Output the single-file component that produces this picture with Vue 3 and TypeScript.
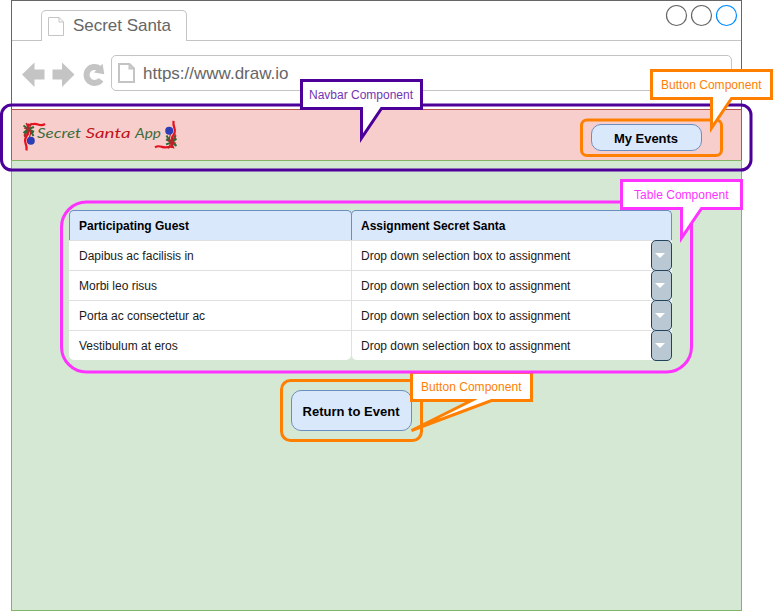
<script setup lang="ts">
interface Callout {
  label: string
  kind: 'navbar' | 'button' | 'table'
  outline: string
  x: number
  baseline: number
  width: number
}

const guests: string[] = [
  'Dapibus ac facilisis in',
  'Morbi leo risus',
  'Porta ac consectetur ac',
  'Vestibulum at eros',
]

const ornaments: string[] = ['', 'rotate(180 78 15.7)']

const callouts: Callout[] = [
  { label: 'Navbar Component', kind: 'navbar', outline: 'M301.5 80.5H421.5V108.5H381.5L361.5 138V108.5H301.5Z', x: 309, baseline: 99, width: 104 },
  { label: 'Button Component', kind: 'button', outline: 'M651.5 70.5H771.5V98.5H731.5L711.5 128V98.5H651.5Z', x: 661, baseline: 89, width: 100.5 },
  { label: 'Table Component', kind: 'table', outline: 'M621.5 180.5H741.5V208.5H701.5L681.5 238V208.5H621.5Z', x: 634, baseline: 199, width: 94.5 },
  { label: 'Button Component', kind: 'button', outline: 'M411.5 372.5H531.5V400.5H491.5L411.5 430.5L471.5 400.5H411.5Z', x: 421, baseline: 391, width: 100.5 },
]
</script>

<template>
  <main class="mockup">
    <section class="browser">
      <header class="tabs">
        <div class="tab">
          <svg class="page-icon" width="16" height="20" viewBox="0 0 16 20">
            <path d="M.5 .5H11L15.5 5V18.5H.5ZM11 .5V5H15.5" />
          </svg>
          <svg class="tab-title" width="100" height="24">
            <text x="0" y="18" textLength="98">Secret Santa</text>
          </svg>
        </div>
        <svg class="controls" width="74" height="24" viewBox="0 0 74 24">
          <circle cx="11.5" cy="11.5" r="10" />
          <circle cx="36.5" cy="11.5" r="10" />
          <circle class="active" cx="61.5" cy="11.5" r="10" />
        </svg>
      </header>

      <div class="toolbar">
        <svg class="nav-icons" width="84" height="28" viewBox="0 0 84 28">
          <path d="M0 13.5L12.5 1.500V8.500H22.500V18.500H12.500V26Z" />
          <path d="M52.500 13.500L40 1.500V8.500H30.500V18.500H40V26Z" />
          <path class="reload" d="M79 18.700A8 8 0 1 1 77.500 7.600" />
          <path d="M80.600 2.800L82.300 13.200L72 11.600Z" />
        </svg>
        <div class="address">
          <svg class="page-icon address-page" width="18" height="21" viewBox="0 0 18 21">
            <path d="M1 1H11.500L16 5.500V19H1ZM11.500 1V5.500H16" />
          </svg>
          <svg class="url" width="150" height="24">
            <text x="0" y="17" textLength="145.5">https://www.draw.io</text>
          </svg>
        </div>
      </div>

      <nav class="navbar">
        <svg class="logo" width="158" height="34" viewBox="0 0 158 34">
          <g v-for="(turn, i) in ornaments" :key="i" :transform="turn">
            <path class="leaf" d="M6 9L1.500 5.500M6 9L1.500 13M6 9L12 7M6 9L12 12M8 10L11.500 16M5 9L3 16" />
            <path class="ribbon" d="M6 3.500V14Q2 19 3.500 23T4.500 30.500M6 5.500Q12 3 16 4.500T23 4" />
            <path class="bow" d="M2 8L10 11M9.500 3L5 14M4 3L8.500 13M9 12L7 19M4 13Q1 15 3 17" />
            <circle class="bauble" cx="8.8" cy="20.7" r="4" />
          </g>
          <text class="green" x="15" y="17.5" textLength="44" lengthAdjust="spacingAndGlyphs">Secret</text>
          <text class="red" x="63.5" y="17.5" textLength="45" lengthAdjust="spacingAndGlyphs">Santa</text>
          <text class="green" x="113" y="17.5" textLength="26" lengthAdjust="spacingAndGlyphs">App</text>
        </svg>
        <button class="action events">
          <svg width="66" height="18"><text x="0" y="14" textLength="64">My Events</text></svg>
        </button>
      </nav>

      <div class="content">
        <div class="table">
          <div class="row head">
            <div class="cell"><svg width="200" height="18"><text x="0" y="13" textLength="110">Participating Guest</text></svg></div>
            <div class="cell"><svg width="200" height="18"><text x="0" y="13" textLength="144.5">Assignment Secret Santa</text></svg></div>
          </div>
          <div v-for="guest in guests" :key="guest" class="row">
            <div class="cell">{{ guest }}</div>
            <div class="cell">
              <span class="hint">Drop down selection box to assignment</span>
              <button class="dropdown" aria-label="Select">
                <svg width="10" height="5" viewBox="0 0 10 5"><path d="M0 0H10L5 5Z" /></svg>
              </button>
            </div>
          </div>
        </div>
        <button class="action return">
          <svg width="100" height="20"><text x="0.5" y="15" textLength="97">Return to Event</text></svg>
        </button>
      </div>
    </section>

    <svg class="annotations" width="773" height="611" viewBox="0 0 773 611">
      <rect class="navbar-mark" x="1.5" y="105" width="749.5" height="65" rx="10" />
      <rect class="button-mark" x="581.5" y="120" width="140" height="35.5" rx="5.5" />
      <rect class="button-mark" x="281.5" y="380.5" width="140" height="60" rx="9" />
      <g v-for="(c, i) in callouts" :key="i" :class="['callout', `${c.kind}-mark`]">
        <path :d="c.outline" />
        <text :x="c.x" :y="c.baseline" :textLength="c.width">{{ c.label }}</text>
      </g>
      <path class="table-mark" d="M620 202H86.500A25 25 0 0 0 61.500 227V347A25 25 0 0 0 86.500 372H666.500A25 25 0 0 0 691.500 347V224" />
    </svg>
  </main>
</template>

<style>
body {
  background: #fff;
  overflow: hidden;
}
</style>

<style scoped>
* {
  box-sizing: border-box;
}

.mockup {
  position: relative;
  width: 773px;
  height: 611px;
  padding-left: 11px;
  font-family: "Liberation Sans", Arial, sans-serif;
  font-size: 12px;
  color: #1a1a1a;
}

svg {
  display: block;
  flex: none;
}

.browser {
  display: flex;
  flex-direction: column;
  width: 731px;
  height: 611px;
  border: 1px solid #666;
  border-bottom: 0;
}

.tabs {
  display: flex;
  justify-content: space-between;
  height: 40px;
  padding: 9px 2px 0 29px;
  border-bottom: 1px solid #c4c4c4;
}

.tab {
  display: flex;
  width: 146px;
  height: 31px;
  padding: 6px 0 0 6px;
  border: 1px solid #c4c4c4;
  border-bottom: 0;
  border-radius: 5px 5px 0 0;
  background: #fff;
}

.page-icon {
  fill: none;
  stroke: #c4c4c4;
}

.tab-title {
  margin: -4px 0 0 9px;
}

.tab-title text,
.url text {
  font-size: 17px;
  fill: #666;
}

.controls {
  margin-top: -6px;
  fill: none;
  stroke: #666;
  stroke-width: 1.2;
}

.controls .active {
  stroke: #008cff;
}

.toolbar {
  display: flex;
  height: 68px;
  padding: 14px 9px 0 10px;
}

.nav-icons {
  margin-top: 6px;
  fill: #c4c4c4;
}

.reload {
  fill: none;
  stroke: #c4c4c4;
  stroke-width: 6;
}

.address {
  display: flex;
  flex: 1;
  height: 36px;
  margin-left: 5px;
  padding: 7px 6px;
  border: 1px solid #c4c4c4;
  border-radius: 5px;
}

.address-page {
  stroke-width: 2;
}

.url {
  margin: -1px 0 0 7px;
}

.navbar {
  display: flex;
  justify-content: space-between;
  height: 51px;
  margin: 0 -1px;
  padding: 10px 39px 0 10px;
  border: 1px solid #b85450;
  border-bottom: 0;
  background: #f8cecc;
}

.logo text {
  font: italic 14px Lato, sans-serif;
}

.logo .green {
  fill: #3d6c3c;
}

.logo .red {
  fill: #c01520;
}

.leaf {
  fill: none;
  stroke: #2c6b35;
  stroke-width: 2;
}

.ribbon {
  fill: none;
  stroke: #e51220;
  stroke-width: 2.2;
}

.bow {
  fill: none;
  stroke: #b0282a;
  stroke-width: 1.2;
}

.bauble {
  fill: #2d3db5;
}

.action {
  display: flex;
  align-items: center;
  justify-content: center;
  flex: none;
  padding: 0;
  border: 1px solid #6c8ebf;
  border-radius: 10px;
  background: #dae8fc;
}

.action text {
  font: bold 13px "Liberation Sans", Arial, sans-serif;
  fill: #000;
}

.events {
  width: 111px;
  height: 27px;
  margin-top: 4px;
}

.content {
  display: flex;
  flex-direction: column;
  flex: 1;
  margin: 0 -1px;
  padding: 49px 0 0 57px;
  border: 1px solid #82b366;
  background: #d5e8d4;
}

.table {
  width: 603px;
  height: 151px;
}

.row {
  display: grid;
  grid-template-columns: 282px 321px;
  height: 30px;
}

.cell {
  display: flex;
  align-items: center;
  padding-left: 10px;
  border-top: 1px solid #e0e0e0;
  background: #fff;
}

.cell + .cell {
  justify-content: space-between;
  border-left: 1px solid #e0e0e0;
  padding-left: 9px;
}

.row:last-child .cell {
  border-radius: 0 0 5px 5px;
}

.head .cell {
  height: 30px;
  border: 1px solid #6c8ebf;
  border-bottom: 0;
  border-radius: 5px 5px 0 0;
  background: #dae8fc;
  padding-left: 9px;
}

.head .cell:first-child {
  margin-right: -1px;
}

.head text {
  font-weight: bold;
  fill: #000;
}

.dropdown {
  display: flex;
  align-items: center;
  width: 21px;
  height: 31px;
  margin: -1px 0 -1px;
  padding: 0 0 0 3px;
  border: 1px solid #23445d;
  border-radius: 5px;
  background: #bac8d3;
  fill: #fff;
}

.return {
  width: 121px;
  height: 41px;
  margin: 29px 0 0 222px;
}

.annotations {
  position: absolute;
  top: 0;
  left: 0;
  fill: none;
  stroke-width: 3;
  stroke-miterlimit: 10;
}

.callout path {
  fill: #fff;
}

.callout text {
  font-size: 12px;
  stroke: none;
}

.navbar-mark {
  stroke: #4c0099;
}

.button-mark {
  stroke: #ff8000;
}

.table-mark {
  stroke: #ff33ff;
}

.navbar-mark text {
  fill: #7335b3;
}

.button-mark text {
  fill: #ff8000;
}

.table-mark text {
  fill: #ff33ff;
}
</style>
